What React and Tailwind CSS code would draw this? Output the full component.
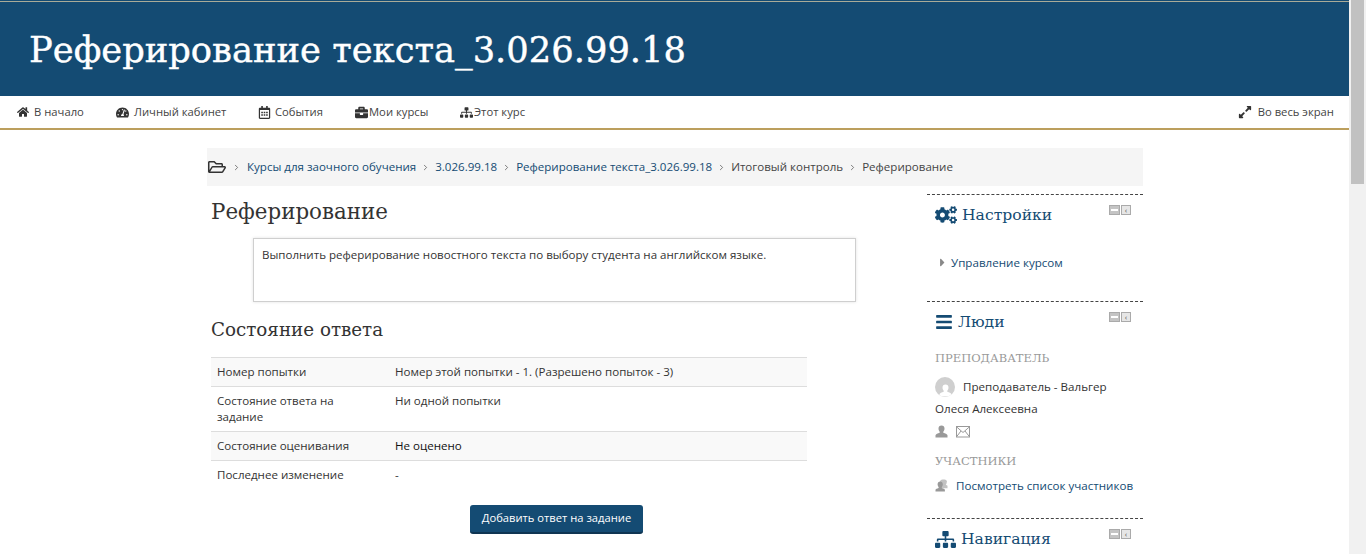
import React from "react";
import { ChevronRight } from "lucide-react";
import {
  FaHome,
  FaTachometerAlt,
  FaRegCalendarAlt,
  FaBriefcase,
  FaSitemap,
  FaExpandAlt,
  FaRegFolderOpen,
  FaCogs,
  FaBars,
  FaCaretRight,
} from "react-icons/fa";

const slab = "font-['DejaVu_Serif',serif]";

const navItems = [
  { icon: FaHome, label: "В начало", w: "w-[99px]", gap: "gap-[5px]", size: 12 },
  { icon: FaTachometerAlt, label: "Личный кабинет", w: "w-[142px]", gap: "gap-[5px]", size: 13 },
  { icon: FaRegCalendarAlt, label: "События", w: "w-[97px]", gap: "gap-[4px]", size: 13 },
  { icon: FaBriefcase, label: "Мои курсы", w: "w-[105px]", gap: "gap-[1px]", size: 13 },
  { icon: FaSitemap, label: "Этот курс", w: "w-auto", gap: "gap-[1px]", size: 13 },
];

const crumbs = [
  "Курсы для заочного обучения",
  "3.026.99.18",
  "Реферирование текста_3.026.99.18",
  "Итоговый контроль",
  "Реферирование",
];

function PersonIcon({ className }) {
  return (
    <svg width="13" height="13" viewBox="0 0 13 13" className={className} fill="currentColor">
      <path d="M6.5 0.5c-1.9 0-3 1.3-3 3.1 0 1.3.5 2.4 1.2 3.1v1.1c-1.9.6-3.9 1.3-4.2 2.4v2.3h12v-2.3c-.3-1.1-2.3-1.8-4.2-2.4v-1.1c.7-.7 1.2-1.8 1.2-3.1 0-1.8-1.1-3.1-3-3.1z" />
    </svg>
  );
}

function GroupIcon({ className }) {
  return (
    <svg width="13" height="13" viewBox="0 0 13 13" className={className} fill="currentColor">
      <path opacity="0.6" d="M7.5 0.5c-1.5 0-2.5 1.1-2.5 2.7h7c0-1.6-1-2.7-2.5-2.7zM5 3.2c0 1.3.5 2.3 1 3v3h6.5v-2.4c-.4-.5-1-.8-1.7-1 .5-.7.9-1.6.9-2.6z" />
      <path d="M5.2 2.5c-1.6 0-2.6 1.2-2.6 2.8 0 1.1.4 2.1 1 2.7v1C2 9.500.700 10 .5 10.800v1.700h9.400v-1.700c-.2-.8-1.500-1.300-3.100-1.800v-1c.6-.6 1-1.600 1-2.700 0-1.600-1-2.800-2.600-2.800z" />
    </svg>
  );
}

function MailIcon({ className }) {
  return (
    <svg width="14" height="12" viewBox="0 0 14 12" className={className} fill="none" stroke="currentColor" strokeWidth="1">
      <rect x="0.5" y="0.5" width="13" height="10.500" />
      <path d="M0.500 0.800 7 6.500 13.500 0.800M0.500 10.800 5 5M13.500 10.800 9 5" />
    </svg>
  );
}

function BlockControls() {
  return (
    <div className="flex gap-[1px] mt-[2px]">
      <span className="w-[11px] h-[10px] bg-[#c4c4c4] border border-[#aaa] flex items-center justify-center">
        <span className="w-[7px] h-[2px] bg-white" />
      </span>
      <span className="w-[10px] h-[10px] bg-[#e6e6e6] border border-[#aaa] flex items-center justify-center text-[8px] leading-none text-[#555]">
        ‹
      </span>
    </div>
  );
}

function BlockHeader({ icon: Icon, title, iconSize, gap }) {
  return (
    <div className="flex justify-between items-start pl-[8px] pr-[12px]">
      <div className={`flex items-center ${gap} text-[#144b73]`}>
        <Icon size={iconSize} />
        <h3 className={`${slab} text-[15.6px] leading-[24px] font-normal`}>{title}</h3>
      </div>
      <BlockControls />
    </div>
  );
}

function Row({ label, value, shaded, strong }) {
  return (
    <tr className={`border-t border-[#dddddd] ${shaded ? "bg-[#f9f9f9]" : ""}`}>
      <td className="w-[178px] px-[6px] py-[6px] align-top leading-[16px]">
        <div className="max-w-[150px]">{label}</div>
      </td>
      <td className={`px-[6px] py-[6px] align-top leading-[16px] ${strong ? "text-[#111]" : ""}`}>{value}</td>
    </tr>
  );
}

export default function App() {
  return (
    <div className="h-[554px] w-[1366px] overflow-hidden flex bg-white text-[11.55px] text-[#333] font-['Open_Sans',sans-serif]">
      <div className="w-[1349px] shrink-0">
        {/* Header */}
        <header className="h-[96px] bg-[#144b73] pt-[1px] flex flex-col">
          <div className="h-[1px] bg-[#a9ab98]" />
          <div className="flex-1 flex items-center pl-[29px]">
            <h1 className={`${slab} text-[35.3px] leading-none text-white font-normal mt-[2px] [-webkit-text-stroke:0.4px_white]`}>
              Реферирование текста_3.026.99.18
            </h1>
          </div>
        </header>

        {/* Nav */}
        <nav className="h-[34px] border-b-2 border-[#bc9f5d] flex items-center justify-between pl-[17px] pr-[15px] text-[11.25px] text-[#444]">
          <div className="flex items-center">
            {navItems.map(({ icon: Icon, label, w, gap, size }) => (
              <div key={label} className={`flex items-center ${w} ${gap}`}>
                <Icon size={size} className="text-[#333]" />
                <span>{label}</span>
              </div>
            ))}
          </div>
          <div className="flex items-center gap-[6px]">
            <FaExpandAlt size={14} className="text-[#333]" />
            <span>Во весь экран</span>
          </div>
        </nav>

        {/* Breadcrumb */}
        <div className="ml-[207px] mt-[18px] w-[936px] h-[38px] bg-[#f5f5f5] flex items-center pl-[1px] text-[#144b73]">
          <FaRegFolderOpen size={18} className="text-[#333]" />
          {crumbs.map((c, i) => (
            <React.Fragment key={c}>
              <ChevronRight size={9} strokeWidth={2} className={`text-[#555] ${i === 0 ? "mx-[6px]" : "mx-[5px]"}`} />
              <span className={i > 2 ? "text-[#444]" : ""}>{c}</span>
            </React.Fragment>
          ))}
        </div>

        <div className="ml-[211px] mt-[8px] flex">
          {/* Main */}
          <main className="w-[716px] shrink-0">
            <h2 className={`${slab} text-[21.4px] leading-[24px] font-normal mt-[6px] text-[#333]`}>Реферирование</h2>
            <div className="ml-[42px] mt-[14px] w-[603px] h-[64px] border border-[#cfcfcf] shadow-[0_0_3px_rgba(0,0,0,0.12)] px-[8px] py-[8px] leading-[16px]">
              Выполнить реферирование новостного текста по выбору студента на английском языке.
            </div>
            <h3 className={`${slab} text-[18.3px] leading-[20px] font-normal mt-[18px] text-[#333]`}>Состояние ответа</h3>
            <table className="mt-[17px] w-[596px] border-collapse">
              <tbody>
                <Row shaded label="Номер попытки" value="Номер этой попытки - 1. (Разрешено попыток - 3)" />
                <Row label="Состояние ответа на задание" value="Ни одной попытки" />
                <Row shaded strong label="Состояние оценивания" value="Не оценено" />
                <Row label="Последнее изменение" value="-" />
              </tbody>
            </table>
            <div className="w-[691px] mt-[16px] flex justify-center">
              <button className="w-[173px] h-[29px] bg-[#144b73] rounded-[3px] border-b-2 border-[#0f3552] text-white text-[11.2px] font-medium">
                Добавить ответ на задание
              </button>
            </div>
          </main>

          {/* Sidebar */}
          <aside className="w-[216px] shrink-0 text-[11.6px]">
            <section className="h-[107px] border-t border-dashed border-[#444] pt-[8px]">
              <BlockHeader icon={FaCogs} title="Настройки" iconSize={22} gap="gap-[5px]" />
              <div className="mt-[27px] pl-[9px] flex items-center gap-[2px] text-[#144b73]">
                <FaCaretRight size={13} className="text-[#888]" />
                <span>Управление курсом</span>
              </div>
            </section>

            <section className="h-[217px] border-t border-dashed border-[#444] pt-[8px]">
              <BlockHeader icon={FaBars} title="Люди" iconSize={18} gap="gap-[5px]" />
              <div className={`${slab} mt-[16px] pl-[8px] text-[11.5px] leading-[16px] text-[#999]`}>ПРЕПОДАВАТЕЛЬ</div>
              <div className="mt-[11px] pl-[8px] flex items-center gap-[8px]">
                <div className="w-[20px] h-[20px] rounded-full bg-[#cfcfcf] flex items-end justify-center overflow-hidden">
                  <PersonIcon className="text-white" />
                </div>
                <span>Преподаватель - Вальгер</span>
              </div>
              <div className="mt-[3px] pl-[8px] leading-[18px]">Олеся Алексеевна</div>
              <div className="mt-[7px] pl-[8px] flex items-center gap-[8px] text-[#999]">
                <PersonIcon />
                <MailIcon />
              </div>
              <div className={`${slab} mt-[15px] pl-[8px] text-[11.5px] leading-[16px] text-[#999]`}>УЧАСТНИКИ</div>
              <div className="mt-[8px] pl-[8px] flex items-center gap-[8px] text-[#144b73]">
                <GroupIcon className="text-[#999]" />
                <span>Посмотреть список участников</span>
              </div>
            </section>

            <section className="border-t border-dashed border-[#444] pt-[8px]">
              <BlockHeader icon={FaSitemap} title="Навигация" iconSize={21} gap="gap-[5px]" />
            </section>
          </aside>
        </div>
      </div>

      {/* Scrollbar */}
      <div className="w-[17px] shrink-0 bg-[#f1f1f1]">
        <div className="h-[184px] ml-[2px] w-[13px] bg-[#c1c1c1]" />
      </div>
    </div>
  );
}
